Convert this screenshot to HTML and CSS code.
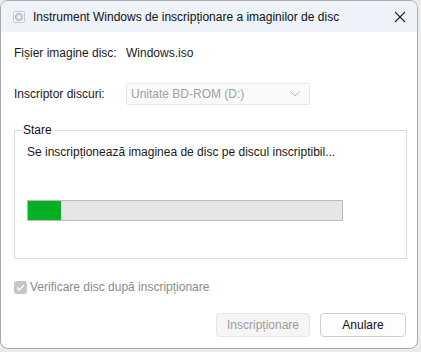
FILE: index.html
```html
<!DOCTYPE html>
<html lang="ro">

<head>
    <meta charset="UTF-8">
    <title>Instrument Windows de inscripționare a imaginilor de disc</title>
    <link rel="stylesheet" href="styles.css">
</head>

<body>
    <div class="window">
        <!-- Title bar -->
        <div class="titlebar">
            <svg class="app-icon" width="12" height="12" viewBox="0 0 12 12">
                <rect x="0.5" y="0.5" width="11" height="11" rx="1" fill="#f4f4f4" stroke="#c8c8c8"/>
                <circle cx="6" cy="6" r="3.6" fill="#d6dbe0" stroke="#9aa3ad" stroke-width="0.8"/>
                <circle cx="6" cy="6" r="1" fill="#fff"/>
            </svg>
            <span class="title">Instrument Windows de inscripționare a imaginilor de disc</span>
            <svg class="close" width="12" height="12" viewBox="0 0 12 12">
                <path d="M1 1 L11 11 M11 1 L1 11" stroke="#222" stroke-width="1.1" fill="none"/>
            </svg>
        </div>

        <div class="content">
            <div class="row row-file">
                <span class="label">Fișier imagine disc:</span>
                <span class="value">Windows.iso</span>
            </div>

            <div class="row row-drive">
                <span class="label">Inscriptor discuri:</span>
                <div class="select">
                    <span>Unitate BD-ROM (D:)</span>
                    <svg width="10" height="6" viewBox="0 0 10 6">
                        <path d="M0.5 0.5 L5 5 L9.5 0.5" stroke="#b4b4b4" stroke-width="1" fill="none"/>
                    </svg>
                </div>
            </div>

            <fieldset class="status">
                <legend>Stare</legend>
                <p class="status-text">Se inscripționează imaginea de disc pe discul inscriptibil...</p>
                <div class="progress">
                    <div class="progress-fill" style="width: 10.5%"></div>
                </div>
            </fieldset>

            <label class="verify">
                <span class="checkbox">
                    <svg width="9" height="7" viewBox="0 0 9 7">
                        <path d="M1 3.5 L3.4 6 L8 1" stroke="#fff" stroke-width="1.2" fill="none"/>
                    </svg>
                </span>
                Verificare disc după inscripționare
            </label>

            <div class="buttons">
                <button class="btn btn-disabled">Inscripționare</button>
                <button class="btn">Anulare</button>
            </div>
        </div>
    </div>
</body>

</html>
```

FILE: styles.css
```css
/* Reset */
* {
    margin: 0;
    padding: 0;
    box-sizing: border-box;
}

body {
    font-family: "Segoe UI", "Liberation Sans", Arial, sans-serif;
    font-size: 12px;
    color: #1a1a1a;
    background-color: #ececec;
    width: 421px;
    height: 352px;
    overflow: hidden;
}

/* Dialog window */
.window {
    width: 418px;
    height: 349px;
    background-color: #fff;
    border: 1px solid #a9a9a9;
    border-radius: 8px;
    overflow: hidden;
    display: flex;
    flex-direction: column;
}

.titlebar {
    height: 31px;
    background-color: #eef2f9;
    display: flex;
    align-items: center;
    padding-left: 12px;
    padding-right: 9px;
}

.app-icon {
    margin-right: 8px;
}

.title {
    flex: 1;
    color: #111;
}

.close {
    margin-right: 2px;
}

/* Main content */
.content {
    padding: 0 11px 0 13px;
    display: flex;
    flex-direction: column;
}

.row {
    display: flex;
    align-items: center;
}

.row-file {
    margin-top: 13px;
    height: 16px;
}

.row-drive {
    margin-top: 22px;
}

.label {
    width: 112px;
}

.select {
    width: 184px;
    height: 22px;
    border: 1px solid #e6e6e6;
    border-radius: 2px;
    background-color: #fafafa;
    color: #a0a0a0;
    display: flex;
    align-items: center;
    justify-content: space-between;
    padding: 0 9px 0 4px;
}

/* Status group */
.status {
    margin-top: 18px;
    width: 393px;
    height: 136px;
    border: 1px solid #dcdcdc;
    padding: 0 12px 0 12px;
}

.status legend {
    margin-left: -5px;
    padding: 0 1px;
    color: #111;
}

.status-text {
    margin-top: 8px;
}

.progress {
    margin-top: 41px;
    width: 316px;
    height: 21px;
    background-color: #e6e6e6;
    border: 1px solid #bcbcbc;
}

.progress-fill {
    height: 100%;
    background-color: #06b025;
}

/* Checkbox */
.verify {
    margin-top: 21px;
    display: flex;
    align-items: center;
    color: #8a8a8a;
}

.checkbox {
    width: 13px;
    height: 13px;
    border-radius: 3px;
    background-color: #c6c6c6;
    display: flex;
    align-items: center;
    justify-content: center;
    margin-right: 3px;
}

/* Buttons */
.buttons {
    margin-top: 19px;
    display: flex;
    justify-content: flex-end;
    gap: 10px;
}

.btn {
    font-family: inherit;
    font-size: 12px;
    height: 24px;
    width: 86px;
    border: 1px solid #d0d0d0;
    border-radius: 4px;
    background-color: #fdfdfd;
    color: #111;
}

.btn-disabled {
    width: 94px;
    background-color: #f5f5f5;
    border-color: #e5e5e5;
    color: #9d9d9d;
}
```
